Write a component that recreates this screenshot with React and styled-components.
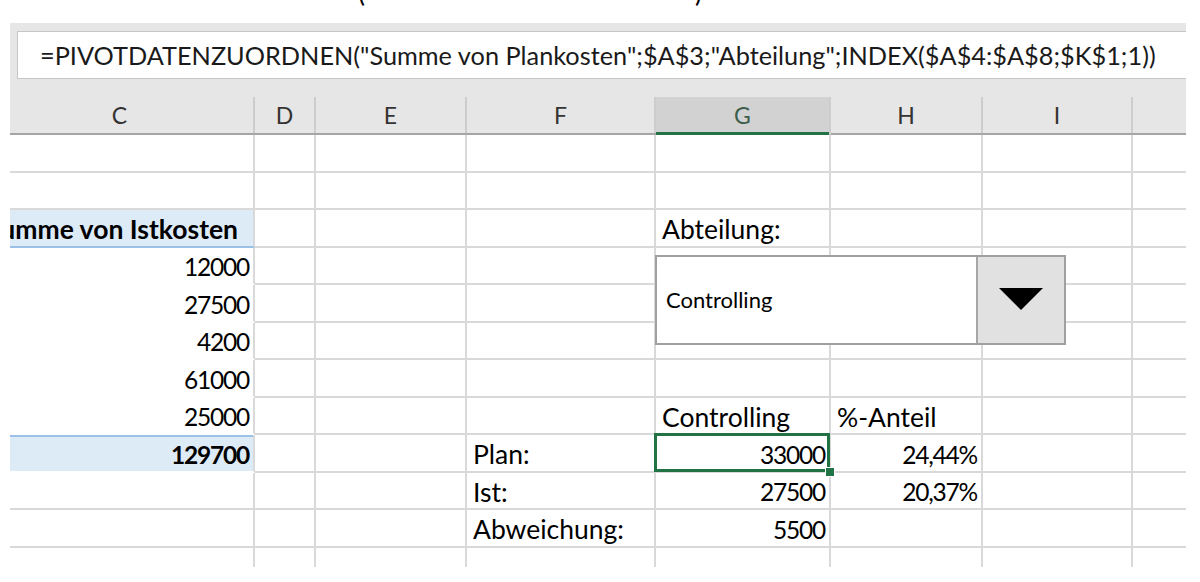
import React from "react";
import styled, { createGlobalStyle } from "styled-components";

const GlobalStyle = createGlobalStyle`
  html, body {
    margin: 0;
    padding: 0;
    background: #ffffff;
  }
  body {
    font-family: "Lato", "Open Sans", sans-serif;
    color: #000;
  }
`;

const COLUMNS = [
  { id: "C", width: 245, labelShift: 24 },
  { id: "D", width: 61 },
  { id: "E", width: 151 },
  { id: "F", width: 189 },
  { id: "G", width: 175, active: true },
  { id: "H", width: 152 },
  { id: "I", width: 150 },
  { id: "J", width: 53, label: "" },
];

const FORMULA =
  '=PIVOTDATENZUORDNEN("Summe von Plankosten";$A$3;"Abteilung";INDEX($A$4:$A$8;$K$1;1))';

// one object per sheet row, keyed by column
const ROWS = [
  {},
  {},
  { C: { text: "Summe von Istkosten", kind: "pivotHead" }, G: { text: "Abteilung:" } },
  { C: { text: "12000", kind: "pivot", num: true } },
  { C: { text: "27500", kind: "pivot", num: true } },
  { C: { text: "4200", kind: "pivot", num: true } },
  { C: { text: "61000", kind: "pivot", num: true } },
  {
    C: { text: "25000", kind: "pivot", num: true },
    G: { text: "Controlling" },
    H: { text: "%-Anteil" },
  },
  {
    C: { text: "129700", kind: "pivotTotal", num: true },
    F: { text: "Plan:" },
    G: { text: "33000", num: true, selected: true },
    H: { text: "24,44%", num: true },
  },
  {
    F: { text: "Ist:" },
    G: { text: "27500", num: true },
    H: { text: "20,37%", num: true },
  },
  {
    F: { text: "Abweichung:" },
    G: { text: "5500", num: true },
  },
  {},
];

export default function App() {
  return (
    <>
      <GlobalStyle />
      <Caption>
        <Paren>(</Paren>
        <Paren>)</Paren>
      </Caption>
      <Sheet>
        <FormulaArea>
          <FormulaBox>{FORMULA}</FormulaBox>
        </FormulaArea>
        <HeaderRow>
          {COLUMNS.map((col) => (
            <ColumnHeader
              key={col.id}
              $width={col.width}
              $active={col.active}
              $shift={col.labelShift || 0}
            >
              {col.label !== undefined ? col.label : col.id}
            </ColumnHeader>
          ))}
        </HeaderRow>
        <Grid>
          {ROWS.map((row, r) =>
            COLUMNS.map((col) => {
              const cell = row[col.id];
              return (
                <Cell
                  key={`${r}-${col.id}`}
                  $kind={cell ? cell.kind : undefined}
                  $num={cell ? cell.num : false}
                  $selected={cell ? cell.selected : false}
                >
                  {cell && cell.text}
                  {r === 3 && col.id === "G" && (
                    <Dropdown>
                      <DropdownValue>Controlling</DropdownValue>
                      <DropdownButton>
                        <svg width="44" height="22" viewBox="0 0 44 22">
                          <polygon points="0,0 44,0 22,22" fill="#000" />
                        </svg>
                      </DropdownButton>
                    </Dropdown>
                  )}
                </Cell>
              );
            })
          )}
        </Grid>
      </Sheet>
    </>
  );
}

const Caption = styled.div`
  height: 23px;
  overflow: hidden;
  display: flex;
  gap: 330px;
  padding-left: 358px;
  font-family: "Lato", sans-serif;
  font-size: 26px;
  line-height: 26px;
`;

const Paren = styled.span`
  margin-top: -21px;
`;

const Sheet = styled.div`
  margin-left: 10px;
  width: 1176px;
  height: 544px;
  overflow: hidden;
  background: #ffffff;
`;

const FormulaArea = styled.div`
  background: #e6e6e6;
  padding: 8px 0 18px 7px;
`;

const FormulaBox = styled.div`
  height: 48px;
  box-sizing: border-box;
  background: #ffffff;
  border: 1px solid #c6c6c6;
  border-right: none;
  padding-left: 22px;
  display: flex;
  align-items: center;
  font-family: "Lato", sans-serif;
  font-size: 25.3px;
  white-space: nowrap;
  color: #1a1a1a;
`;

const HeaderRow = styled.div`
  display: flex;
  background: #e6e6e6;
  border-bottom: 2px solid #a5a5a5;
`;

const ColumnHeader = styled.div`
  width: ${(p) => p.$width}px;
  box-sizing: border-box;
  display: flex;
  align-items: center;
  justify-content: center;
  padding-right: ${(p) => p.$shift}px;
  padding-bottom: ${(p) => (p.$active ? "2px" : "0")};
  border-right: 2px solid #cdcdcd;
  font-family: "Lato", sans-serif;
  font-size: 23px;
  color: ${(p) => (p.$active ? "#3d5e4c" : "#333")};
  background: ${(p) => (p.$active ? "#d2d2d2" : "transparent")};
  box-shadow: ${(p) => (p.$active ? "inset 0 -3px 0 #217346" : "none")};
  margin-bottom: ${(p) => (p.$active ? "-2px" : "0")};
  height: ${(p) => (p.$active ? "38px" : "36px")};
  &:last-child {
    border-right: none;
  }
`;

const Grid = styled.div`
  display: grid;
  grid-template-columns: ${COLUMNS.map((c) => `${c.width}px`).join(" ")};
  grid-auto-rows: 37.5px;
`;

const cellBackground = (kind) =>
  kind === "pivotHead" || kind === "pivotTotal" ? "#ddebf7" : "#ffffff";

const cellBottom = (kind) => {
  if (kind === "pivotHead") return "#9bc2e6";
  if (kind === "pivot" || kind === "pivotTotal") return "#ffffff";
  return "#d9d9d9";
};

const Cell = styled.div`
  position: relative;
  box-sizing: border-box;
  border-right: 2px solid #d9d9d9;
  border-bottom: 2px solid ${(p) => cellBottom(p.$kind)};
  background: ${(p) => cellBackground(p.$kind)};
  box-shadow: ${(p) => (p.$kind === "pivotTotal" ? "inset 0 2px 0 #9bc2e6" : "none")};
  display: flex;
  align-items: center;
  justify-content: ${(p) => (p.$num || p.$kind === "pivotHead" ? "flex-end" : "flex-start")};
  padding: 3px ${(p) => (p.$kind === "pivotHead" ? "15px" : "4px")} 0 6px;
  font-family: "Lato", sans-serif;
  font-size: ${(p) => (p.$num ? "24.5px" : "26.5px")};
  letter-spacing: ${(p) => (p.$num ? "-1.2px" : "0")};
  font-weight: ${(p) => (p.$kind === "pivotHead" || p.$kind === "pivotTotal" ? 700 : 400)};
  white-space: nowrap;
  color: #000;

  &:nth-child(8n) {
    border-right: none;
  }

  ${(p) =>
    p.$selected &&
    `
    &::after {
      content: "";
      position: absolute;
      top: -2px;
      left: -2px;
      right: -1px;
      bottom: -1px;
      border: 3px solid #217346;
      pointer-events: none;
    }
    &::before {
      content: "";
      position: absolute;
      right: -6px;
      bottom: -6px;
      width: 8px;
      height: 8px;
      background: #217346;
      border: 1px solid #ffffff;
      z-index: 2;
    }
  `}
`;

const Dropdown = styled.div`
  position: absolute;
  top: 7px;
  left: -1px;
  width: 411px;
  height: 90px;
  box-sizing: border-box;
  display: flex;
  border: 2px solid #a0a0a0;
  background: #ffffff;
  z-index: 3;
  letter-spacing: 0;
`;

const DropdownValue = styled.div`
  flex: 1;
  display: flex;
  align-items: center;
  padding: 0 0 0 9px;
  font-family: "Lato", sans-serif;
  font-size: 22px;
  color: #000;
`;

const DropdownButton = styled.div`
  width: 88px;
  box-sizing: border-box;
  display: flex;
  align-items: center;
  justify-content: center;
  background: #e1e1e1;
  border-left: 2px solid #a6a6a6;
  padding-bottom: 1px;
`;
